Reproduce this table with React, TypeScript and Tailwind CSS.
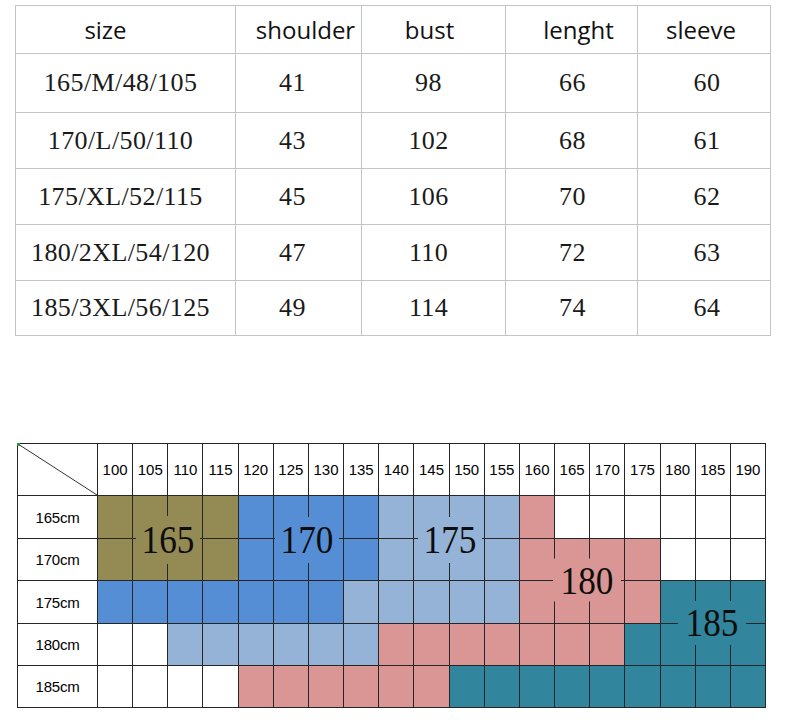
import React from "react";

const topHead = ["size", "shoulder", "bust", "lenght", "sleeve"];
const topRows = [
  ["165/M/48/105", "41", "98", "66", "60"],
  ["170/L/50/110", "43", "102", "68", "61"],
  ["175/XL/52/115", "45", "106", "70", "62"],
  ["180/2XL/54/120", "47", "110", "72", "63"],
  ["185/3XL/56/125", "49", "114", "74", "64"],
];
const headPad = ["pr-[40px]", "pl-[14px]", "pr-[8px]", "pl-[14px]", "pr-[6px]"];
const bodyPad = ["pr-[10px]", "pr-[12px]", "pr-[10px]", "pl-[2px]", "pl-[6px]"];
const rowH = ["h-[59px]", "h-[56px]", "h-[56px]", "h-[56px]", "h-[55px]"];

const colorCls: Record<string, string> = {
  O: "bg-[#948a54]",
  B: "bg-[#558ed5]",
  L: "bg-[#95b3d7]",
  P: "bg-[#da9694]",
  T: "bg-[#31859c]",
  W: "bg-white",
};

const busts = ["100", "105", "110", "115", "120", "125", "130", "135", "140", "145", "150", "155", "160", "165", "170", "175", "180", "185", "190"];
const chartRows: { label: string; h: string; cells: string }[] = [
  { label: "165cm", h: "h-[43px]", cells: "OOOOBBBBLLLLPWWWWWW" },
  { label: "170cm", h: "h-[42px]", cells: "OOOOBBBBLLLLPPPPWWW" },
  { label: "175cm", h: "h-[43px]", cells: "BBBBBBBLLLLLPPPPTTT" },
  { label: "180cm", h: "h-[42px]", cells: "WWLLLLLLPPPPPPPTTTT" },
  { label: "185cm", h: "h-[42px]", cells: "WWWWPPPPPPTTTTTTTTT" },
];

const labels = [
  { t: "165", pos: "left-[150px] top-[96px]", bg: "bg-[#948a54]", box: "w-[64px] h-[48px]" },
  { t: "170", pos: "left-[289px] top-[96px]", bg: "bg-[#558ed5]", box: "w-[64px] h-[46px]" },
  { t: "175", pos: "left-[432px] top-[96px]", bg: "bg-[#95b3d7]", box: "w-[64px] h-[46px]" },
  { t: "180", pos: "left-[569px] top-[136px]", bg: "bg-[#da9694]", box: "w-[68px] h-[43px]" },
  { t: "185", pos: "left-[694px] top-[179px]", bg: "bg-[#31859c]", box: "w-[68px] h-[44px]" },
];

export default function App() {
  return (
    <div className="w-[790px] h-[720px] bg-white overflow-hidden pt-[5px] text-[#111]">
      {/* Top measurement table */}
      <div className="ml-[15px] w-[756px] grid grid-cols-[220px_126px_144px_132px_133px] border-t border-l border-[#c4c4c4]">
        {topHead.map((h, i) => (
          <div
            key={h}
            className={`h-[48px] border-r border-b border-[#c4c4c4] flex items-center justify-center text-[24px] leading-none font-['Open_Sans',sans-serif] ${headPad[i]}`}
          >
            {h}
          </div>
        ))}
        {topRows.map((r, ri) =>
          r.map((c, ci) => (
            <div
              key={ri + "-" + ci}
              className={`${rowH[ri]} border-r border-b border-[#c4c4c4] flex items-center justify-center text-[26px] leading-none tracking-[0.4px] text-[#1a1a1a] font-['Liberation_Serif',serif] ${bodyPad[ci]}`}
            >
              {c}
            </div>
          ))
        )}
      </div>

      {/* Size chart grid */}
      <div className="relative ml-[17px] mt-[107px] w-[749px] border-t border-l border-[#262626] grid grid-cols-[80px_repeat(19,1fr)]">
        <div className="relative h-[52px] border-r border-b border-[#262626]">
          <svg className="absolute inset-0" width="79" height="51" viewBox="0 0 79 51">
            <line x1="0" y1="0" x2="79" y2="51" stroke="#333" strokeWidth="1" />
          </svg>
          <div className="absolute -left-px -top-px w-[3px] h-[3px] bg-[#2e9a3a]" />
        </div>
        {busts.map((b) => (
          <div
            key={b}
            className="h-[52px] border-r border-b border-[#262626] flex items-center justify-center text-[15px] leading-none font-['Liberation_Sans',sans-serif] text-black"
          >
            {b}
          </div>
        ))}
        {chartRows.map((row) => (
          <React.Fragment key={row.label}>
            <div
              className={`${row.h} border-r border-b border-[#262626] flex items-center justify-center text-[15px] leading-none tracking-[-0.2px] font-['Liberation_Sans',sans-serif] text-black`}
            >
              {row.label}
            </div>
            {row.cells.split("").map((c, i) => (
              <div key={i} className={`${row.h} border-r border-b border-[#262626] ${colorCls[c]}`} />
            ))}
          </React.Fragment>
        ))}

        {labels.map((l) => (
          <div
            key={l.t}
            className={`absolute ${l.pos} -translate-x-1/2 -translate-y-1/2 ${l.box} ${l.bg} flex items-center justify-center`}
          >
            <span className="inline-block scale-x-[0.88] text-[40px] leading-none font-['Liberation_Serif',serif] text-[#0d0d0d]">
              {l.t}
            </span>
          </div>
        ))}
      </div>
    </div>
  );
}
